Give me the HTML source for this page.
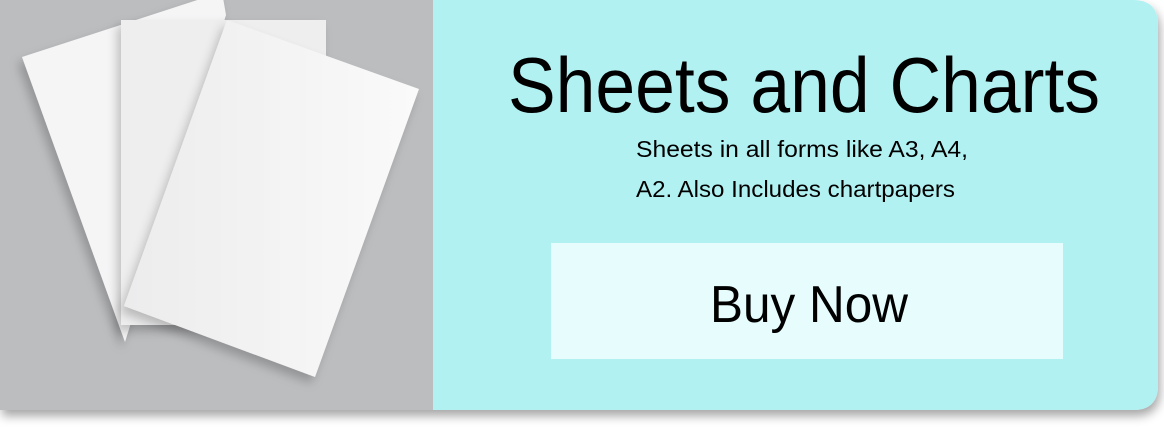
<!DOCTYPE html>
<html><head><meta charset="utf-8"><style>
html,body{margin:0;padding:0;background:#fff;width:1164px;height:432px;overflow:hidden}
</style></head><body>
<svg width="1164" height="432" viewBox="0 0 1164 432" xmlns="http://www.w3.org/2000/svg">
<defs>
<filter id="sh" x="-10%" y="-10%" width="120%" height="130%"><feDropShadow dx="2" dy="6" stdDeviation="5" flood-color="#000" flood-opacity="0.35"/></filter>
<filter id="ps" x="-20%" y="-20%" width="140%" height="140%"><feDropShadow dx="-4" dy="6" stdDeviation="5" flood-color="#000" flood-opacity="0.22"/></filter>
<linearGradient id="pg" x1="0" y1="0" x2="1" y2="0"><stop offset="0" stop-color="#ececed"/><stop offset="1" stop-color="#fafafa"/></linearGradient>
</defs>
<g filter="url(#sh)">
<path d="M0 0 H1133 Q1158 0 1158 25 V385 Q1158 410 1133 410 H0 Z" fill="#b2f1f2"/>
<rect x="0" y="0" width="433" height="410" fill="#bcbdbf"/>
</g>
<g filter="url(#ps)">
<polygon points="22,57 222,-8 226,15 125,342" fill="#f5f5f6"/>
</g>
<g filter="url(#ps)">
<rect x="121" y="20" width="205" height="305" fill="#eeeeef"/>
</g>
<g filter="url(#ps)">
<polygon points="227,20 419,89 315,377 124,306" fill="url(#pg)"/>
</g>
<text x="508" y="112" textLength="592" lengthAdjust="spacingAndGlyphs" font-family="Liberation Sans, sans-serif" font-size="78" fill="#000">Sheets and Charts</text>
<text x="636" y="157" textLength="332" lengthAdjust="spacingAndGlyphs" font-family="Liberation Sans, sans-serif" font-size="23" fill="#000">Sheets in all forms like A3, A4,</text>
<text x="636" y="197" textLength="319" lengthAdjust="spacingAndGlyphs" font-family="Liberation Sans, sans-serif" font-size="23" fill="#000">A2. Also Includes chartpapers</text>
<rect x="551" y="243" width="512" height="116" fill="#e6fcfd"/>
<text x="710" y="322" textLength="198" lengthAdjust="spacingAndGlyphs" font-family="Liberation Sans, sans-serif" font-size="52" fill="#000">Buy Now</text>
</svg>
</body></html>
